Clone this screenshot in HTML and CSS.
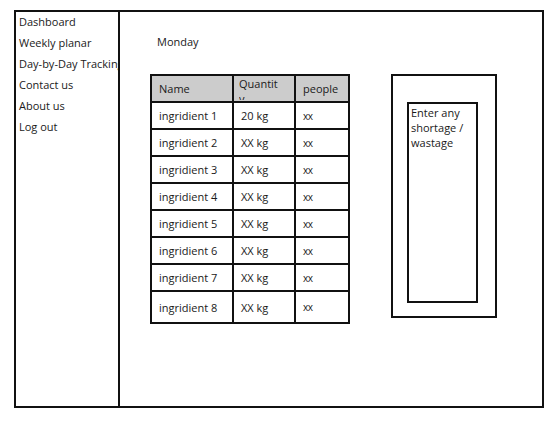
FILE: index.html
```html
<!DOCTYPE html>
<html lang="en">
<head>
    <meta charset="UTF-8">
    <meta name="viewport" content="width=device-width, initial-scale=1.0">
    <title>Day-by-Day Tracking</title>
    <link rel="stylesheet" href="styles.css">
</head>
<body>
    <div class="frame">
        <div class="sidebar">
            <a href="#">Dashboard</a>
            <a href="#">Weekly planar</a>
            <a href="#">Day-by-Day Tracking</a>
            <a href="#">Contact us</a>
            <a href="#">About us</a>
            <a href="#">Log out</a>
        </div>
        <div class="main">
            <div class="day">Monday</div>
            <div class="content">
                <table class="stock">
                    <tr class="head">
                        <th class="col-name">Name</th>
                        <th class="col-qty"><div class="clip">Quantity</div></th>
                        <th class="col-people">people</th>
                    </tr>
                    <tr><td>ingridient 1</td><td>20 kg</td><td class="small">xx</td></tr>
                    <tr><td>ingridient 2</td><td>XX kg</td><td class="small">xx</td></tr>
                    <tr><td>ingridient 3</td><td>XX kg</td><td class="small">xx</td></tr>
                    <tr><td>ingridient 4</td><td>XX kg</td><td class="small">xx</td></tr>
                    <tr><td>ingridient 5</td><td>XX kg</td><td class="small">xx</td></tr>
                    <tr><td>ingridient 6</td><td>XX kg</td><td class="small">xx</td></tr>
                    <tr><td>ingridient 7</td><td>XX kg</td><td class="small">xx</td></tr>
                    <tr class="last"><td>ingridient 8</td><td>XX kg</td><td class="small">xx</td></tr>
                </table>
                <div class="note-box">
                    <div class="note">Enter any shortage / wastage</div>
                </div>
            </div>
        </div>
    </div>
</body>
</html>
```

FILE: styles.css
```css
body {
    margin: 0;
    padding: 0;
    font-family: "Open Sans", "Noto Sans", sans-serif;
    font-size: 11px;
    color: #1a1a1a;
    background-color: #fff;
}
.frame {
    display: flex;
    margin: 10px 0 0 14px;
    width: 526px;
    height: 394px;
    border: 2px solid #111;
}
.sidebar {
    display: flex;
    flex-direction: column;
    width: 99px;
    padding: 0 0 0 3px;
    margin-top: -1px;
    border-right: 2px solid #111;
    overflow: hidden;
}
.sidebar a {
    color: #1a1a1a;
    text-decoration: none;
    line-height: 21px;
    white-space: nowrap;
}
.main {
    flex: 1;
    padding: 21px 0 0 30px;
}
.day {
    padding-left: 7px;
    line-height: 18px;
    margin-bottom: 23px;
}
.content {
    display: flex;
    align-items: flex-start;
    gap: 41px;
}
.stock {
    border-collapse: collapse;
    border: 2px solid #111;
}
.stock th, .stock td {
    border: 2px solid #111;
    padding: 0 0 0 7px;
    height: 25px;
    text-align: left;
    font-weight: normal;
    vertical-align: middle;
}
.stock .head th {
    background-color: #ccc;
    height: 25px;
}
.col-name { width: 73px; }
.col-qty { width: 55px; }
.col-people { width: 45px; }
.stock .head .col-qty {
    vertical-align: top;
    padding-left: 5px;
}
.clip {
    width: 42px;
    height: 24px;
    line-height: 15px;
    overflow: hidden;
    word-break: break-all;
}
.stock .last td {
    height: 30px;
}
.small {
    font-size: 10px;
    letter-spacing: -0.5px;
}
.note-box {
    width: 71px;
    height: 214px;
    padding: 26px 17px 0 14px;
    border: 2px solid #111;
}
.note {
    height: 196px;
    border: 2px solid #111;
    padding: 1px 2px 0 2px;
    line-height: 15px;
}
```
